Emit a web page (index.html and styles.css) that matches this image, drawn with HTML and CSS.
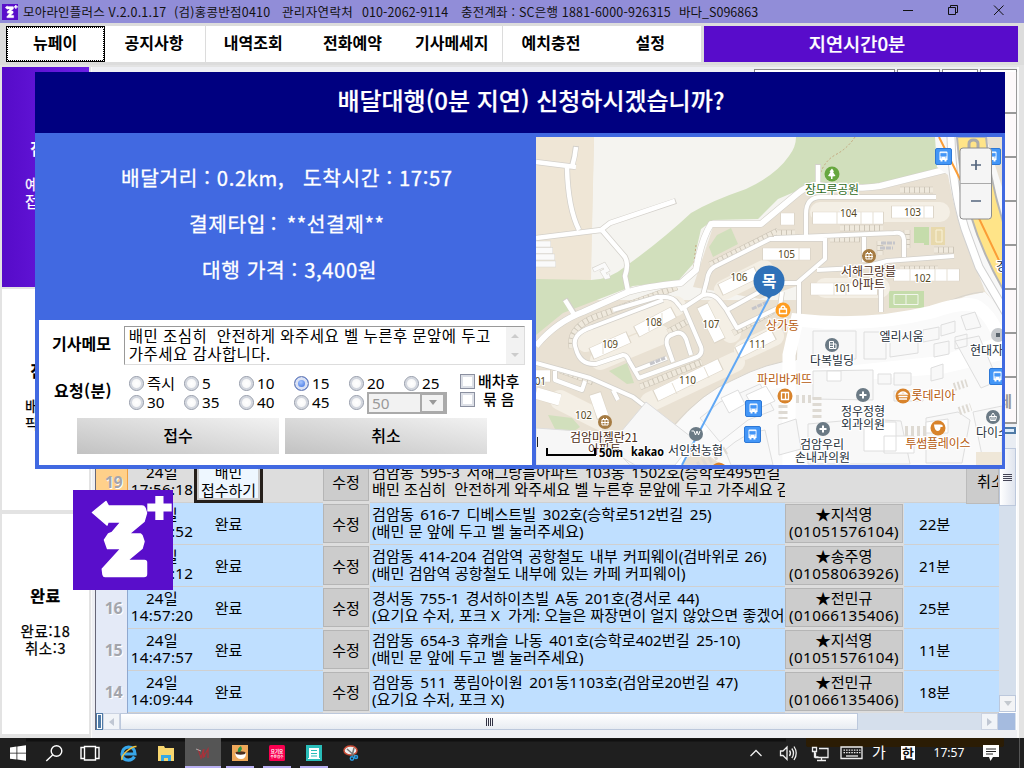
FILE: index.html
```html
<!DOCTYPE html>
<html lang="ko">
<head>
<meta charset="utf-8">
<title>모아라인플러스</title>
<link rel="stylesheet" href="styles.css">
</head>
<body>
<svg width="0" height="0" class="defs" aria-hidden="true">
  <defs>
    <symbol id="zlogo" viewBox="0 0 100 100">
      <rect width="100" height="100" fill="#590ecb"/>
      <path d="M19.500 22.500 33 11.500l2.500 4.500H69q2 0 3 2l1.500 5-2.500 8.500L56 44h11.500l1.500 1.500 2 6-2 7L54.500 70.500H71.500q2 0 2 2V84q0 2.500-2.500 2.500H32q-1.500 0-2-2L29.300 79l18.700-20.500H34.500l-3-8.500 4-6 3.500-1.500 9-10.500H35l-1 3z" fill="#fff" stroke="#fff" stroke-width="1.500" stroke-linejoin="round"/>
      <path d="M82.300 6h8.200v7.500h8.200v8h-8.200V30h-8.200v-8.500h-8v-8h8z" fill="#fff"/>
    </symbol>
    <symbol id="bus" viewBox="0 0 17 17">
      <rect x=".5" y=".5" width="16" height="16" rx="1.5" fill="#4396f7" stroke="#2d78d6"/>
      <path d="M4.500 4.500q0-1 1-1h6q1 0 1 1v7.500h-1v1.500h-2V12h-2v1.500h-2V12h-1z" fill="#fff"/>
      <path d="M5.700 5.300h5.600v3H5.700zM5.500 9.800h1.400M10.100 9.800h1.400" fill="#4396f7" stroke="#4396f7" stroke-width=".6"/>
    </symbol>
  </defs>
</svg>
<div class="screen">
  <header class="titlebar">
    <svg class="app-icon" width="16" height="16"><use href="#zlogo"/></svg>
    <span class="t-a">모아라인플러스 V.2.0.1.17</span>
    <span class="t-b">(검)홍콩반점0410</span>
    <span class="t-c">관리자연락처</span>
    <span class="t-d">010-2062-9114</span>
    <span class="t-e">충전계좌 : SC은행 1881-6000-926315</span>
    <span class="t-f">바다_S096863</span>
    <svg class="win-buttons" width="122" height="23" fill="none" stroke="#111"><path d="M5 10.500h10M50.500 7.500h7v7h-7zM52.500 7.500v-2h7v7h-2M96 5.500l9.500 9.500M105.500 5.500L96 15"/></svg>
  </header>
  <nav class="menu">
    <div class="menu-group">
      <button class="menu-item focused">뉴페이</button><button class="menu-item">공지사항</button><button class="menu-item sep">내역조회</button><button class="menu-item">전화예약</button><button class="menu-item">기사메세지</button><button class="menu-item sep">예치충전</button><button class="menu-item">설정</button>
    </div>
    <div class="delay">지연시간0분</div>
  </nav>
  <main class="workspace">
    <aside class="sidebar">
      <section class="card active"><h2>접수</h2><p>예약:0</p><p>접수:1</p></section>
      <section class="card"><h2>진행</h2><p>배차:0</p><p>픽업:0</p></section>
      <section class="card"><h2>완료</h2><p>완료:18</p><p>취소:3</p></section>
    </aside>
    <section class="board">
      <div class="filters">
        <div class="f-top"><i class="f1"></i><i class="f2"></i><i class="f3"></i><i class="f4"></i></div>
        <div class="f-side"><i></i><i></i><i></i><i></i><i></i><i></i><i></i><i class="last">레</i></div>
      </div>
      <div class="grid">
        <div class="rows">
          <div class="row current"><div class="no">19</div><div class="time">24일<br>17:56:18</div><div class="state"><span class="accept">배민<br>접수하기</span></div><div class="edit"><b>수정</b></div><div class="addr"><span>검암동 595-3 서해그랑블아파트 103동 1502호(승학로495번길 33)</span><span class="s">배민 조심히&nbsp; 안전하게 와주세요 벨 누른후 문앞에 두고 가주세요 감사합니다.</span></div><div class="rider"></div><div class="mins"></div><div class="cancel">취소</div></div>
          <div class="row"><div class="no">18</div><div class="time">24일<br>15:33:52</div><div class="state">완료</div><div class="edit"><b>수정</b></div><div class="addr"><span>검암동 616-7 디베스트빌 302호(승학로512번길 25)</span><span class="s">(배민 문 앞에 두고 벨 눌러주세요)</span></div><div class="rider"><b>★지석영<br><em>(01051576104)</em></b></div><div class="mins">22분</div></div>
          <div class="row"><div class="no">17</div><div class="time">24일<br>15:05:12</div><div class="state">완료</div><div class="edit"><b>수정</b></div><div class="addr"><span class="n">검암동 414-204 검암역 공항철도 내부 커피웨이(검바위로 26)</span><span class="s">(배민 검암역 공항철도 내부에 있는 카페 커피웨이)</span></div><div class="rider"><b>★송주영<br><em>(01058063926)</em></b></div><div class="mins">21분</div></div>
          <div class="row"><div class="no">16</div><div class="time">24일<br>14:57:20</div><div class="state">완료</div><div class="edit"><b>수정</b></div><div class="addr"><span class="m">경서동 755-1 경서하이츠빌 A동 201호(경서로 44)</span><span class="s">(요기요 수저, 포크 X&nbsp; 가게: 오늘은 짜장면이 얼지 않았으면 좋겠어요)</span></div><div class="rider"><b>★전민규<br><em>(01066135406)</em></b></div><div class="mins">25분</div></div>
          <div class="row"><div class="no">15</div><div class="time">24일<br>14:47:57</div><div class="state">완료</div><div class="edit"><b>수정</b></div><div class="addr"><span>검암동 654-3 휴캐슬 나동 401호(승학로402번길 25-10)</span><span class="s">(배민 문 앞에 두고 벨 눌러주세요)</span></div><div class="rider"><b>★지석영<br><em>(01051576104)</em></b></div><div class="mins">11분</div></div>
          <div class="row"><div class="no">14</div><div class="time">24일<br>14:09:44</div><div class="state">완료</div><div class="edit"><b>수정</b></div><div class="addr"><span>검암동 511 풍림아이원 201동1103호(검암로20번길 47)</span><span class="s">(요기요 수저, 포크 X)</span></div><div class="rider"><b>★전민규<br><em>(01066135406)</em></b></div><div class="mins">18분</div></div>
        </div>
        <div class="vscroll"><span class="vcap"></span><span class="vup"></span><span class="vthumb"></span><span class="vdown"></span></div>
        <div class="hscroll"><span class="split"></span><span class="harrow left"></span><span class="hthumb"></span><span class="htrack"></span><span class="harrow right"></span><span class="corner"></span></div>
      </div>
    </section>
  </main>
  <footer class="taskbar">
    <svg width="1024" height="30" viewBox="0 738 1024 30">
      <rect y="738" width="1024" height="30" fill="#1f1f1f"/>
      <path d="M26 740h760" stroke="#101010" stroke-width="3"/>
      <path d="M806 738h198v7q0 2-3 2H809q-3 0-3-2z" fill="#2b1c04"/>
      <rect x="185" y="738" width="36" height="30" fill="#555"/>
      <path d="M185 767h36M226 767h28M263 767h28M300 767h28" stroke="#b9b0f3" stroke-width="2"/>
      <path d="M10 747.500l6.500-.9v6.100H10zM17.300 746.500l8.700-1.200v7.400h-8.700zM10 753.500h6.500v6.100l-6.500-.9zM17.300 753.500H26v7.300l-8.700-1.200z" fill="#fff"/>
      <g fill="none" stroke="#fff" stroke-width="1.400"><circle cx="56.500" cy="751" r="5.300"/><path d="M52.600 755l-6.300 6"/><path d="M84.500 746.500h11v13.500h-11zM84 747.500h-3v11h3M96 747.500h3v11h-3"/></g>
      <g fill="none"><path d="M124 754h11q-.2-7-6.500-7-6 .5-6.500 7 .5 6 6.500 6.200 4-.2 6-3.500" stroke="#38a7ea" stroke-width="3.200"/><path d="M122 760q-1-4 5-9t9.500-4.500" stroke="#f4c43b" stroke-width="1.500"/></g>
      <path d="M158 746h6l1 2h9v13h-16z" fill="#f7d66f"/><path d="M161 761v-6h10v6h-3v-3h-4v3z" fill="#36a9e6"/>
      <path d="M198 749l3 9 2-7 2 6M204 749l-1 9 5-9v9" fill="none" stroke="#a8323a" stroke-width="1.200"/><path d="M196 749l5 2" stroke="#aaa"/>
      <rect x="232" y="745" width="16" height="16" fill="#eda759"/><path d="M235 753h11q0 6-5 6-5 0-6-6z" fill="#fff"/><ellipse cx="240.500" cy="753" rx="5" ry="1.700" fill="#4c2e20"/><path d="M238 752q-1-4 3-6l1 3-2 3z" fill="#299446"/>
      <rect x="269" y="745" width="16" height="16" rx="1.500" fill="#fa0050"/><text x="277" y="752.500" class="yo" text-anchor="middle">요기요</text><text x="277" y="758" class="yo small" text-anchor="middle">주문접수</text>
      <rect x="306" y="745" width="16" height="16" fill="#29bdb9"/><path d="M309 748h10v10h1v1h-12v-1h1z" fill="#fff"/><path d="M311 750.500h6M311 753.500h6M311 756h6" stroke="#29bdb9"/>
      <ellipse cx="350.500" cy="750.500" rx="6.500" ry="4.500" fill="#eee" stroke="#c94b35" stroke-width="1.500"/><path d="M347 749l8 7M354 748l-2 8" stroke="#777" stroke-width="1.500"/><g fill="none" stroke="#2b9be0" stroke-width="1.500"><circle cx="352" cy="758.500" r="1.700"/><circle cx="356" cy="757" r="1.500"/></g>
      <g fill="none" stroke="#eee" stroke-width="1.300"><path d="M750.500 756l5.500-5.500 5.500 5.500"/><path d="M780.500 751v4.500h2.500l4 4v-12.500l-4 4zM789.500 750.500q2 2.700 0 5.500M791.800 748.500q3.500 4.700 0 9.500M794 746.500q4.500 6.700 0 13.500"/><path d="M819 748.500h9v9h-12.500v-5M821.500 758v3M817 760.500h9M812.500 747.500h4v4h-4zM814.500 752v5h4"/><path d="M841 747h21v11.500h-21z"/><path d="M843.500 750.200h17M843.500 752.700h17" stroke-dasharray="1.500 1.100"/><path d="M846 756h12"/></g>
      <text x="872" y="758" class="ime">가</text>
      <rect x="901" y="746" width="14" height="14" fill="#fff"/><text x="908" y="758" class="han" text-anchor="middle">한</text>
      <text x="933.500" y="757" class="clock" textLength="31" lengthAdjust="spacingAndGlyphs">17:57</text>
      <path d="M983 745h16v12h-6l-2.500 4-1.500-4h-6z" fill="#fff"/><path d="M986 749h10M986 751.500h10M986 754h7" stroke="#222"/>
      <path d="M1019.500 738v30" stroke="#555"/>
    </svg>
  </footer>

  <svg class="float-logo" width="100" height="100"><use href="#zlogo"/></svg>

  <div class="dialog">
    <h1 class="dialog-title">배달대행(0분 지연) 신청하시겠습니까?</h1>
    <div class="dialog-body">
      <div class="info">
        <div class="facts">
          <p class="d1">배달거리 : 0.2km,&nbsp;&nbsp; 도착시간 : 17:57</p>
          <p class="d2">결제타입 :&nbsp; **선결제**</p>
          <p class="d3">대행 가격 : 3,400원</p>
        </div>
        <form class="form">
          <div class="memo-row"><label class="lbl">기사메모</label>
            <div class="memo"><div class="memo-text"><span>배민 조심히&nbsp; 안전하게 와주세요 벨 누른후 문앞에 두고</span><span>가주세요 감사합니다.</span></div><div class="memo-scroll"><i class="up"></i><i class="down"></i></div></div>
          </div>
          <div class="req-row"><label class="lbl req">요청(분)</label>
            <div class="radios">
              <span class="radio">즉시</span><span class="radio">5</span><span class="radio">10</span><span class="radio on">15</span><span class="radio">20</span><span class="radio">25</span>
              <span class="radio">30</span><span class="radio">35</span><span class="radio">40</span><span class="radio">45</span><span class="radio"><span class="select">50<i></i></span></span>
            </div>
            <div class="checks"><span class="check">배차후</span><span class="check c2">묶 음</span></div>
          </div>
          <div class="actions"><button class="btn" type="button">접수</button><button class="btn" type="button">취소</button></div>
        </form>
      </div>
      <div class="map">
        <svg width="466" height="328" viewBox="536 137 466 328">
          <rect x="536" y="137" width="466" height="328" fill="#e9e1d3"/>
          <path d="M594 137H800V300H590z" fill="#f5f4f0"/>
          <path d="M536 137h58l-3 143h-55z" fill="#efe6d6"/>
          <path d="M536 279l55 1q18 0 35-14 35-25 65-53 20-12 55-24 30-14 43-33 7-9 7-19h144l8 30-60 17h-75l-35 15-20 20-45 1-12 9-8 35-15 17-45 5-70 27-27 22z" fill="#d1dfbc"/>
          <path d="M760 222l20-15 30-22 60 1 72-17 18 60-200 70-67-12 20-60z" fill="#e9e1d3"/>
          <path d="M855 137q-8 12-20 18-10 6-14 17M696 245l-3 28" fill="none" stroke="#c4a67c" stroke-dasharray="2 2"/>
          <path d="M536 244h15M536 250.500h17M536 257h19M536 264h20" stroke="#d8d5ce" stroke-width="6.600"/><path d="M536 244h14.500M536 250.500h16.500M536 257h18.500M536 264h19.500" stroke="#fafafa" stroke-width="5.400"/>
          <path d="M593 270l11-5 3 5-4 2 3 5 4-1" fill="none" stroke="#d5d2cc" stroke-width="5"/><path d="M593.500 270l10.500-5 3 5-4 2 3 5 3.500-1" fill="none" stroke="#fafafa" stroke-width="4"/>
          <path d="M709 247l8-12 14-7 7 16-25 13zM609 371l18-8 7 20-7 1zM548 415l24 3 8 9-10 7-15-5z" fill="#d1dfbc"/>
          <path d="M914 227h15v18h-5v-2h-10zM889 291h35v17h-35z" fill="#c5dcab"/><path d="M894 294.500h24v10h-24zM906 294.500v10" fill="none" stroke="#f2f6ec"/>
          <rect x="931" y="227" width="14" height="18" fill="#e8d9ac"/><path d="M936 230h6v12h-6z" fill="none" stroke="#faf3da"/>

          <g fill="none" stroke="#f4efe5" stroke-width="20" stroke-linejoin="round" stroke-linecap="round">
            <path d="M586 342l90-36M600 360l60-25M650 402l85-40M724 290l40-20M820 212h120M825 288h55M716 308l15 25M744 350l30-14M560 400l40 20"/>
          </g>
          <g fill="none" stroke="#cdc6b8" stroke-width="6.500">
            <path d="M572 348q-4-20 23-31l82-30M710 265l68-34M900 190h33M840 228h43M907 230v18M900 269h38M934 250h20M560 370l33 12M668 332l22-12M640 387l62-25M733 333l40-22M777 233h18M830 239h30M880 241v14"/>
            <path d="M572 348q-4-20 23-31l82-30M710 265l68-34M900 190h33M840 228h43M907 230v18M900 269h38M934 250h20M560 370l33 12M668 332l22-12M640 387l62-25M733 333l40-22M777 233h18M830 239h30M880 241v14" stroke="#efe9dd" stroke-width="5.500" stroke-dasharray="4 1"/>
          </g>
          <g fill="none" stroke="#d3d0ca" stroke-width="5.500" stroke-linejoin="round">
            <path d="M663 300l-71 27q-22 7-16 22 4 16 20 15l27-9q4 0 6 6l10 17 58-21q6-3 4-10l-18-42M613 310l44-13q16-2 21 7l5 6M673 362l-6-17q-2-9 7-11 8-4 12 5l5 16M636 370l31-12M680 310l23-15 4-15q1-9 7-13l56-28h55M703 295q10-2 16 5l7 9 11 19 43-21M806 236v-22q0-17 15-17h115M774 238l120-5q9-2 10 7v17M825 236v23l-28 24H774M864 234v28M817 270l40-2q20-4 30-7l67-5M799 281v40M881 262v50M536 363l54 15 43 19 40 31 24 15M555 371v9l27 10 3-9M613 390l5 10M727 310l45-25M780 307l2-15"/>
          </g>
          <g fill="none" stroke="#fff" stroke-width="4" stroke-linejoin="round">
            <path d="M663 300l-71 27q-22 7-16 22 4 16 20 15l27-9q4 0 6 6l10 17 58-21q6-3 4-10l-18-42M613 310l44-13q16-2 21 7l5 6M673 362l-6-17q-2-9 7-11 8-4 12 5l5 16M636 370l31-12M680 310l23-15 4-15q1-9 7-13l56-28h55M703 295q10-2 16 5l7 9 11 19 43-21M806 236v-22q0-17 15-17h115M774 238l120-5q9-2 10 7v17M825 236v23l-28 24H774M864 234v28M817 270l40-2q20-4 30-7l67-5M799 281v40M881 262v50M536 363l54 15 43 19 40 31 24 15M555 371v9l27 10 3-9M613 390l5 10M727 310l45-25M780 307l2-15"/>
          </g>
          <g fill="none" stroke="#d3d0ca" stroke-linejoin="round" stroke-width="6"><path d="M536 162l40 5M576 146q-1 10-4 20M567 168q1 40 12 62M536 238l65-8 9-7 66-22M601 229l24 28q4 7 0 19l3 15M565 299l10 16M818 164v20"/><path stroke-width="7" d="M536 346q20-24 47-34l45-20q15-5 53-9l15-13q5-30 15-46h50l36-30q12-10 20-9 40 5 63 1l68-17"/></g>
          <g fill="none" stroke="#fff" stroke-width="4.500" stroke-linejoin="round"><path d="M536 162l40 5M576 147q-1 10-4 20M567 168q1 40 12 62M536 238l65-8 9-7 65-22M601 229l24 28q4 7 0 19l3 15M565 300l10 16M818 165v20"/><path stroke-width="6" d="M536 346q20-24 47-34l45-20q15-5 53-9l15-13q5-30 15-46h50l36-30q12-10 20-9 40 5 63 1l68-17"/></g>

          <g fill="none" stroke="#ddd6c9" stroke-width="12.600"><path d="M591 354l38-17M636 332l38-20M655 396l66-32M720 290l37-18M702 305l18 36M737 353l37-19M762 254h49M812 218h72M891 212h43M810 289h68M893 275h67M536 376h15M595 393l8 25M560 400l-24-7M780 219h15"/></g>
          <g fill="none" stroke="#fff" stroke-width="11.400"><path d="M592 353.500l36-16M637 331.500l36-19M656 395.500l64-31M721 289.500l35-17M702.500 306l17 34M738 352.500l35-18M763 254h47M813 218h70M892 212h41M811 289h66M894 275h65M536 376h14M595 394l8 23M560 400l-24-7M781 219h13"/></g>
          <path d="M603 343v11M615 338v11M649 318v13M662 313v13M672 383l5 11M688 375l5 11M704 367l5 11M799 248v12M837 212v12M861 212v12M873 212v12M911 206v12M924 206v12M834 283v12M846 283v12M910 269v12M935 269v12M947 269v12" stroke="#e5dfd3"/>
          <g fill="none" stroke="#c5c5ca" stroke-width="3" stroke-dasharray="5 1"><path d="M650 364l15-6M881 243h14M880 248h13M752 309l15-7"/></g>

          <path d="M673 428q30-36 60-48 35-18 64-20l1-40q10-4 82-4 52-4 86-20l19-4 17 18v155H722l-25-18z" fill="#fafafa"/>
          <path d="M673 426q30-34 60-46 35-18 63-20v-40M800 317q68 4 135-10 30-14 48-15" fill="none" stroke="#d8d4cd"/>
          <path d="M665 465l48-49q35-28 65-38t30-8l132-14 62-20v24l-60 14-135 10q-55 4-90 32l-35 49z" fill="#fff"/>
          <path d="M536 428l42 3 57 34H536zM646 402l49 38-20 25h-45l-20-20z" fill="#f7f7f7" stroke="#ddd"/>
          <path d="M789 465V355l8-35q70 8 135-8 35-12 46-5 17 12 24 40" fill="none" stroke="#fff" stroke-width="13"/>
          <g fill="#f8f8f8" stroke="#dedede">
            <path d="M813 331h43v28h-43zM864 332h22v27h-22zM890 340l28-7v20l-28 4zM923 330l16-3v12l-16 3zM941 325l14-4v11l-14 4zM961 316l14-4 6 15-15 3zM934 344l15-3v13l-15 3zM955 337l12-3v12l-12 3zM813 371l60-1v30l-60-1zM878 374h13v10h-13zM894 373h17v12h-17zM894 391h29v10h-29zM931 368l12-4v14l-12 3zM955 341l24-5 19 45-17 7z"/>
            <path d="M808 424l56-5 37 2 9 43H808zM926 418l32-6 12 8-8 43h-36zM973 412l29-6v59h-18zM778 425l18-6 5 30-22 6zM700 418l20-16 40-18 14 26-26 10-28 22zM725 450q20-18 40-20l8 35h-42z"/>
            <path d="M827 371h14v10h-14zM884 436h30v17h-30zM926 422l22-3v14h-22zM864 422h32v29h-32zM746 395l20-9 9 15-20 9zM721 398l17-8 7 14-16 9z" fill="#fff"/>
          </g>
          <g stroke="#dedad3" fill="none"><path d="M796 399h17" stroke-width="8" stroke-dasharray="3 3"/><path d="M783 405v14M817 397v22" stroke-width="9" stroke-dasharray="3 3"/><path d="M905 431h23" stroke-width="10" stroke-dasharray="3 3"/><path d="M954 387l13-4M959 411l12-4" stroke-width="8" stroke-dasharray="2 2"/><path d="M698 466l28-16" stroke-width="8" stroke-dasharray="3 3"/></g>
          <path d="M976 452h26v13h-26z" fill="#efe7d8"/>

          <path d="M935 137h51l16 50v125l-17-21q-3-8-20-51-9-22-17-65l-11-8z" fill="#f8f8f8"/>
          <path d="M951 137q1 50 14 92l14 38 27 46" fill="none" stroke="#d0d0d0" stroke-width="9"/><path d="M951 137q1 50 14 92l14 38 27 46" fill="none" stroke="#fff" stroke-width="7"/>
          <path d="M957 137h29q4 45 18 88v66q-22-38-34-78-10-32-13-76z" fill="#ffe488" stroke="#b5b5b5" stroke-width="2"/>
          <path d="M939 137l27 54 38 80" fill="none" stroke="#fb9d36" stroke-width="2"/>
          <path d="M969 149v-5q0-4 4.500-4t4.500 4v5" fill="none" stroke="#aaa" stroke-width="3"/>
          <path d="M769 298l-87 167" stroke="#60a8f5" stroke-width="2"/>

          <use href="#bus" x="935" y="148" width="17" height="17"/><use href="#bus" x="984" y="148" width="17" height="17"/><use href="#bus" x="745" y="400" width="17" height="17"/><use href="#bus" x="744" y="426" width="17" height="17"/><use href="#bus" x="989" y="368" width="17" height="17"/>

          <circle cx="832" cy="174" r="7.500" fill="#67a73f"/><path d="M832 168.500l2 3-1 .5 2.500 4-3 .5v2.500h-1.500v-2.500l-3-.5 2.500-4-1-.5z" fill="#fff"/>
          <g fill="#a67c43"><circle cx="869" cy="256" r="7"/><circle cx="605" cy="422" r="7"/></g>
          <g fill="none" stroke="#fff"><path d="M866 253.500v5.500h6v-5.500zM865 256.500h8M869 253v6M867.500 252v2M870.500 252v2M602 419.500v5.500h6v-5.500zM601 422.500h8M605 419v6M603.500 418v2M606.500 418v2"/></g>
          <circle cx="783" cy="310" r="7.500" fill="#ff9d20"/><path d="M779.500 309h7v4.500h-7zM781 309q0-3 2-3t2 3" fill="none" stroke="#fff" stroke-width="1.300"/>
          <g fill="#d8832b"><circle cx="785" cy="396" r="7.500"/><circle cx="903" cy="396" r="7.500"/><circle cx="938" cy="428" r="7.500"/><path d="M713 465q6-5 12 0z"/></g>
          <g fill="none" stroke="#fff" stroke-width="1.300"><path d="M781.500 392.500h7v7h-7zM785.500 392.500v7"/><path d="M899 394q4-4 8 0zM898.500 396.500h9M899 399h8"/></g><path d="M934 424.500h6.500q3 0 2 2.500h-2q0 4-3 4t-3.500-6.500z" fill="#fff"/>
          <g fill="#6b7a85"><circle cx="832" cy="345" r="7"/><circle cx="863" cy="395" r="7"/><circle cx="823" cy="429" r="7"/><circle cx="696" cy="434" r="7"/><circle cx="993" cy="417" r="7"/></g>
          <g stroke="#fff" fill="none"><path d="M829.500 341.500h4v7h-4zM833.500 344h2.500v4.500h-2.500M829.500 344h4M829.500 346.500h4"/><path d="M859.500 395h7M863 391.500v7M819.500 429h7M823 425.500v7" stroke-width="2"/><path d="M691.500 431h2.500l1.500 4 1.500-4 1.500 4 1.500-4M989.500 416.500h7l-1 4h-5zM991 416l2-3 2 3M992 417v3M994 417v3"/></g>
          <circle cx="998" cy="335" r="7" fill="#c5c8cc"/><rect x="996" y="333" width="4" height="4" fill="#59636c"/>

          <g class="num"><text x="602" y="347.500" textLength="16">109</text><text x="645" y="326" textLength="17">108</text><text x="702.500" y="328" textLength="17">107</text><text x="679" y="383.500" textLength="17">110</text><text x="749" y="347.500" textLength="17">111</text><text x="730.500" y="281" textLength="17">106</text><text x="778" y="257.500" textLength="17">105</text><text x="840" y="217" textLength="17">104</text><text x="904" y="216" textLength="17">103</text><text x="914" y="282" textLength="17">102</text><text x="834" y="292" textLength="17">101</text><text x="575" y="419" textLength="17">102</text><text x="529" y="385" textLength="17">101</text></g>
          <g class="lb green"><text x="805" y="194" textLength="54">장모루공원</text></g>
          <g class="lb brown"><text x="841" y="276" textLength="55">서해그랑블</text><text x="852" y="289" textLength="33">아파트</text><text x="570" y="441.500" textLength="68">검암마젤란21</text><text x="588" y="454" textLength="33">아파트</text></g>
          <g class="lb gray"><text x="810" y="364.500" textLength="44">다복빌딩</text><text x="879.500" y="340.500" textLength="44">엘리시움</text><text x="970" y="355">현대자동차</text><text x="841" y="415.500" textLength="44">정우정형</text><text x="841" y="428.500" textLength="44">외과의원</text><text x="800" y="449" textLength="44">검암우리</text><text x="795" y="462" textLength="55">손내과의원</text><text x="668" y="454.500" textLength="55">서인천농협</text><text x="976" y="437">다이소</text><text x="996" y="271">경서</text></g>
          <g class="lb org"><text x="757" y="384" textLength="55">파리바게뜨</text><text x="766" y="330" textLength="33">상가동</text><text x="911.500" y="400" textLength="44">롯데리아</text><text x="905.500" y="448" textLength="65">투썸플레이스</text></g>

          <path d="M769 299l-5-5h10z" fill="#2f71b8"/><circle cx="769" cy="281" r="15.500" fill="#2f71b8"/><text x="769" y="287" class="mok" text-anchor="middle">목</text>

          <path d="M537.500 437v10" stroke="#222"/><path d="M547 448v7h48v-7" fill="none" stroke="#000" stroke-width="2"/>
          <text x="599" y="457" class="scale" textLength="24" lengthAdjust="spacingAndGlyphs">50m</text><text x="631" y="455.500" class="kakao" textLength="33" lengthAdjust="spacingAndGlyphs">kakao</text>
          <rect x="960" y="148" width="31.500" height="71" rx="3" fill="#f5f5f5" stroke="#8e8e8e"/><path d="M960 183.500h31" stroke="#aaa"/><path d="M971 165h10M976 160v10M971 201h10" stroke="#54657d" stroke-width="1.700"/>
        </svg>
      </div>
    </div>
  </div>
</div>
</body>
</html>
```
FILE: styles.css
```css
* { box-sizing: border-box; }
body { margin: 0; font-family: "Noto Sans", "Noto Sans CJK KR", sans-serif; color: #000; }
p, h1, h2 { margin: 0; font-weight: 400; }
button { font: inherit; border: 0; padding: 0; background: none; color: inherit; }
.defs { position: absolute; }
.screen { position: relative; width: 1024px; height: 768px; overflow: hidden; display: flex; flex-direction: column; background: #e3e3e3; }

.titlebar { height: 23px; background: #918dd8; display: flex; align-items: center; font: 12.5px/22px "Noto Sans CJK KR", sans-serif; white-space: pre; padding-left: 2px; color: #111; }
.titlebar span { flex: none; overflow: visible; }
.app-icon { flex: none; margin-right: 5px; }
.t-a { width: 151px; letter-spacing: .2px; }
.t-b { width: 108px; letter-spacing: .25px; }
.t-c { width: 80px; letter-spacing: .35px; }
.t-d { width: 99px; letter-spacing: .1px; }
.t-e { width: 218px; letter-spacing: .2px; }
.t-f { width: 219px; letter-spacing: 0; }
.win-buttons { flex: none; }

.menu { height: 42px; display: flex; padding: 3px 6px 3px 6px; background: #dcdcdc; gap: 3px; }
.menu-group { display: flex; width: 695px; height: 36px; background: #fff; }
.menu-item { width: 99.400px; font: 700 16px/31px "Noto Sans CJK KR", sans-serif; padding: 0 3px 4px 0; border-left: 1px solid transparent; }
.menu-item.sep { border-left-color: #dcdcdc; }
.menu-item.focused { border: 2px solid #000; outline: 1px dotted #fff; outline-offset: -2px; padding: 0 1px 4px 0; line-height: 27px; }
.delay { width: 314px; height: 36px; background: #580ccb; color: #fff; font: 500 18.700px/33px "Noto Sans CJK KR", sans-serif; text-align: center; padding-right: 8px; -webkit-text-stroke: .2px #fff; }

.workspace { flex: 1; display: flex; padding: 2px 3px 0 2px; gap: 2px; background: #e3e3e3; }
.sidebar { width: 87px; display: flex; flex-direction: column; gap: 2px; }
.card { height: 221px; background: #fff; text-align: center; padding-top: 69px; font: 500 14.500px/16.500px "Noto Sans CJK KR", sans-serif; letter-spacing: .6px; -webkit-text-stroke: .25px currentColor; }
.card:nth-child(3) { margin-top: 2px; height: 220px; }
.card h2 { font: 700 16px/24px "Noto Sans CJK KR", sans-serif; margin-bottom: 16px; }
.card.active { height: 220px; background: linear-gradient(90deg, #560bc8, #6d1fe6); color: #fff; }
.board { width: 928px; display: flex; flex-direction: column; background: #eeeff3; border-left: 1px solid #fafafa; border-right: 2px solid #fafafa; padding-left: 3px; }
.filters { height: 360px; display: flex; flex-direction: column; padding-top: 2px; }
.f-top { height: 3px; display: flex; padding-left: 659px; gap: 2px; }
.f-top i { border: 1px solid #888; border-bottom: 0; background: #fff; }
.f1 { width: 142px; } .f2 { width: 43px; } .f3 { width: 37px; } .f4 { width: 37px; }
.f-side { display: flex; flex-direction: column; align-items: flex-end; }
.f-side i { display: block; width: 80px; height: 44px; background: #fdf9fa; border: 1px solid #888; border-width: 0 1px 2px 0; border-color: #999; }
.f-side i:first-child { height: 42px; }
.f-side i.last { height: 46px; text-align: right; padding: 14px 4px 0 0; font: 700 15px/18px "Noto Sans CJK KR", sans-serif; color: #999; }

.grid { width: 922px; height: 303px; display: grid; grid-template: 286px 17px / 903px 17px; border: 1px solid #667; border-width: 0 0 0 1px; background: #fff; }
.rows { background: #bfdfff; overflow: hidden; display: flex; flex-direction: column; justify-content: flex-end; height: 286px; }
.row { flex: none; height: 42px; display: grid; grid-template-columns: 32px 66px 129px 47px 415px 119px 95px; border-bottom: 1px solid #d0d0d0; font-size: 15.200px; line-height: 16.500px; }
.row > div { min-width: 0; text-align: center; }
.no { font: 700 16px/43px "Noto Sans", sans-serif; color: #a3a5ac; text-shadow: 1px 1px #fff; background: #e4eaf7; border-right: 1px solid #8fa8cf; padding-left: 4px; letter-spacing: -.3px; }
.time { padding-top: 3px; white-space: nowrap; letter-spacing: .25px; }
.row .time { padding-left: 2px; }
.state { padding: 13px 60px 0 0; font-size: 15px; }
.edit, .rider { background: #ddd; padding: 1px 1px 1px 0; }
.edit b, .rider b { display: block; height: 39px; background: #ccc; border: 1px solid #b5b5b5; font-weight: 400; }
.edit b { line-height: 38px; font-size: 15px; }
.rider b { padding-top: 1px; line-height: 16.500px; white-space: nowrap; }
.rider em { font-style: normal; letter-spacing: .4px; }
.row .addr { text-align: left; padding: 3px 0 0 2px; overflow: hidden; }
.addr span { display: block; white-space: nowrap; word-spacing: 2.500px; }
.addr .n { word-spacing: 1.300px; }
.addr .m { word-spacing: 2px; }
.addr .s { word-spacing: .2px; }
.row .mins { text-align: left; padding: 13px 0 0 15px; }
.current { background: #ddd; grid-template-columns: 32px 66px 129px 47px 415px 119px 62px 33px; }
.current .no { background: #ffd08a; border-color: #f0a040; }
.current .rider { background: none; }
.current .cancel { background: #ccc; border: 1px solid #bbb; overflow: hidden; white-space: nowrap; line-height: 39px; text-align: left; padding-left: 10px; }
.row.current .state { padding: 0 61px 0 0; }
.accept { display: block; width: 69px; height: 42px; border: 3px solid #251f1b; outline: 2px solid #ccc; outline-offset: -5px; background: #eef7ff; line-height: 17.500px; font-size: 15px; }

.vscroll { background: #d5dfec; display: flex; flex-direction: column; height: 285px; }
.vcap { height: 7px; background: #dcebfb; border: 2px solid #4f7aa6; }
.vup { height: 14px; background: #e9edf3; }
.vthumb { height: 58px; background: linear-gradient(90deg, #fff, #dfe4ee); border: 1px solid #bcc8dc; display: grid; place-items: center; }
.vthumb::after { content: ""; width: 9px; height: 8px; margin-top: 1px; background: repeating-linear-gradient(#445 0 1px, transparent 1px 2px); }
.vdown { margin-top: auto; height: 17px; background: #f3f4f6; border: 1px solid #bcc8dc; display: grid; place-items: center; }
.vdown::after { content: ""; border: 4px solid transparent; border-top: 5px solid #c4c9cf; border-bottom: 0; }
.hscroll { grid-column: 1 / 3; display: flex; height: 17px; background: #d5dfec; }
.split { width: 7px; border: 1px solid #4f7aa6; box-shadow: inset 0 0 0 1px #fff; background: #4f7aa6; }
.harrow { width: 17px; background: #f1f4f8; border: 1px solid #cbd3e2; display: grid; place-items: center; }
.harrow.left::after { content: ""; border: 4px solid transparent; border-right: 5px solid #c0c7d3; border-left: 0; }
.harrow.right::after { content: ""; border: 4px solid transparent; border-left: 5px solid #c0c7d3; border-right: 0; }
.hthumb { width: 738px; background: linear-gradient(#fff, #e8ecf2); border: 1px solid #bcc8dc; display: grid; place-items: center; }
.hthumb::after { content: ""; width: 7px; height: 8px; background: repeating-linear-gradient(90deg, #334 0 1px, transparent 1px 2px); }
.htrack { flex: 1; }
.corner { width: 17px; background: #a5bbdf; margin-right: 1px; }

.taskbar { height: 30px; }
.taskbar svg { display: block; }
.yo { font: 700 4.500px "Noto Sans CJK KR", sans-serif; fill: #fff; }
.yo.small { font-size: 3.500px; }
.ime { font: 15px "Noto Sans CJK KR", sans-serif; fill: #fff; }
.han { font: 700 13px "Noto Sans CJK KR", sans-serif; fill: #111; }
.clock { font: 12px "Noto Sans", sans-serif; fill: #fff; }

.float-logo { position: absolute; left: 73px; top: 490px; }

.dialog { position: absolute; left: 35px; top: 72px; width: 970px; height: 397px; display: flex; flex-direction: column; background: #4169e1; }
.dialog-title { height: 61px; background: #000080; color: #fff; text-align: center; font: 500 24px/56px "Noto Sans CJK KR", sans-serif; padding-left: 22px; -webkit-text-stroke: .2px #fff; }
.dialog-body { display: flex; padding: 4px; }
.info { width: 493px; margin-right: 4px; display: flex; flex-direction: column; }
.facts { height: 183px; color: #fff; font: 20.300px/46px "Noto Sans CJK KR", sans-serif; letter-spacing: .6px; padding-top: 17px; white-space: nowrap; -webkit-text-stroke: .3px #fff; }
.d1 { padding-left: 82px; } .d2 { padding-left: 150px; word-spacing: -1.500px; } .d3 { padding-left: 163px; }
.form { height: 145px; background: #fff; padding: 6px 7px 0 13px; }
.lbl { width: 72px; font: 700 16px/35px "Noto Sans CJK KR", sans-serif; }
.lbl.req { padding-left: 2px; line-height: 34px; letter-spacing: .3px; }
.memo-row, .req-row { display: flex; }
.memo { width: 402px; height: 39px; display: flex; border: 1px solid #999; border-color: #999 #ddd #ddd #999; }
.memo-text { flex: 1; padding: 0 0 0 4px; font-size: 15.500px; letter-spacing: .45px; line-height: 18px; }
.memo-text span { display: block; white-space: nowrap; word-spacing: .3px; }
.memo-scroll { width: 18px; background: #f2f2f2; display: flex; flex-direction: column; justify-content: space-between; align-items: center; padding: 7px 0; }
.up { border: 4px solid transparent; border-bottom: 4px solid #ccc; border-top: 0; }
.down { border: 4px solid transparent; border-top: 4px solid #ccc; border-bottom: 0; }
.req-row { height: 44px; margin-top: 8px; }
.radios { width: 336px; display: grid; grid-template-columns: repeat(6, 55px); grid-auto-rows: 19px; padding: 1px 0 0 5px; font-size: 15.300px; line-height: 17px; }
.radio { display: flex; white-space: nowrap; gap: 3px; height: 19px; align-items: center; }
.radio::before { content: ""; flex: none; width: 13px; height: 13px; border-radius: 50%; border: 1px solid #9299a8; box-shadow: inset 0 0 0 2px #d3d7df; background: radial-gradient(#fff, #f0f0f0); }
.radio.on::before { background: radial-gradient(circle at 45% 40%, #a6c6ff 0, #3c6fe0 60%); border-color: #6478b0; box-shadow: inset 0 0 0 3px #dbe2f3; }
.select { width: 80px; height: 22px; flex: none; border: 2px solid #aaa; background: #f2f2f2; color: #999; display: flex; justify-content: space-between; padding-left: 3px; line-height: 18px; }
.select i { width: 25px; border: 2px solid #aaa; border-width: 1px 2px; display: grid; place-items: center; }
.select i::after { content: ""; border: 4px solid transparent; border-top: 5px solid #999; border-bottom: 0; }
.checks { display: flex; flex-direction: column; font-size: 15px; line-height: 17px; }
.check { display: flex; gap: 3px; align-items: center; white-space: nowrap; height: 17.500px; font-weight: 500; }
.check::before { content: ""; width: 13px; height: 13px; flex: none; border: 1px solid #8b90a0; box-shadow: inset 0 0 0 2px #dde0e7; background: #fff; }
.check.c2 { gap: 8px; }
.actions { display: flex; gap: 6px; padding: 1px 0 0 25px; }
.btn { width: 202px; height: 36px; background: linear-gradient(10deg, #c2c2c2, #f2f2f2); font: 500 16px/32px "Noto Sans CJK KR", sans-serif; padding-bottom: 2px; }

.map { width: 466px; height: 328px; }
.map svg { display: block; }
.num { font: 10px "Noto Sans", sans-serif; fill: #554722; paint-order: stroke; stroke: #fff; stroke-width: 2px; }
.lb { font: 12px "Noto Sans CJK KR", sans-serif; paint-order: stroke; stroke: #fff; stroke-width: 2.500px; stroke-linejoin: round; }
.green { fill: #2f6b22; } .brown { fill: #4b2c14; } .gray { fill: #25303a; } .org { fill: #b65a0b; }
.mok { font: 700 16px "Noto Sans CJK KR", sans-serif; fill: #fff; }
.scale { font: 700 12px "Noto Sans", sans-serif; paint-order: stroke; stroke: #fff; stroke-width: 1.500px; }
.kakao { font: 700 13px "Noto Sans", sans-serif; paint-order: stroke; stroke: #fff; stroke-width: 2px; }
```
